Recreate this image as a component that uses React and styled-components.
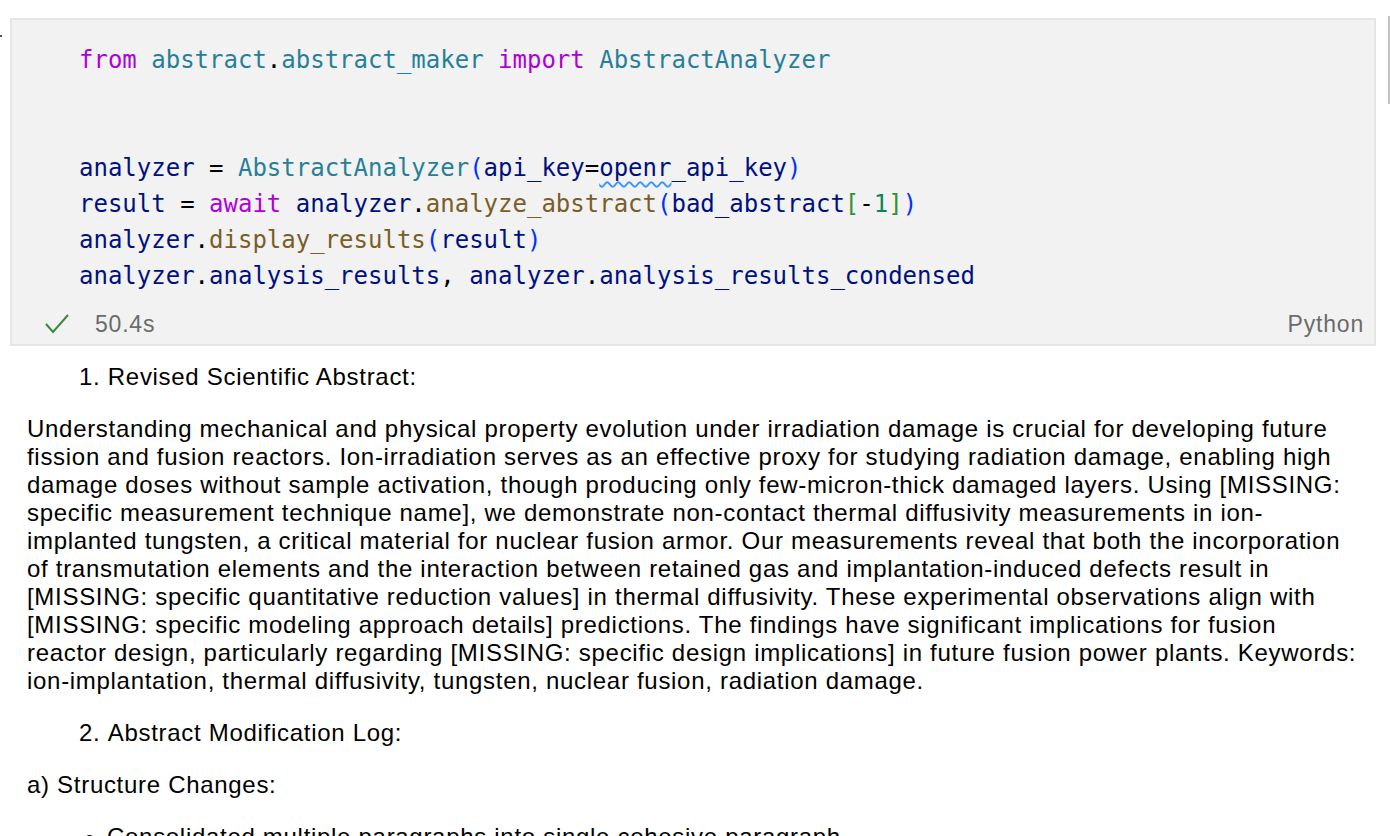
import React from "react";
import styled, { createGlobalStyle } from "styled-components";

const Global = createGlobalStyle`
  html, body { margin: 0; padding: 0; background: #ffffff; }
  body { font-family: "Liberation Sans", Arial, sans-serif; color: #000; overflow: hidden; }
`;

const Page = styled.div`
  position: relative;
  width: 1390px;
  height: 836px;
  overflow: hidden;
  padding-top: 18px;
  box-sizing: border-box;
`;

const Cell = styled.div`
  margin-left: 10px;
  width: 1366px;
  box-sizing: border-box;
  background: #f2f2f2;
  border: 2px solid #e6e6e6;
`;

const Code = styled.pre`
  margin: 0;
  padding: 22px 0 6px 67px;
  font-family: "DejaVu Sans Mono", Menlo, monospace;
  font-size: 24px;
  line-height: 36px;
  color: #001080;
  white-space: pre;
`;

const Tok = styled.span`
  color: ${(p) => p.$c};
`;

const Squiggle = styled.span`
  text-decoration: underline wavy #3794ff;
  text-decoration-thickness: 1.5px;
  text-underline-offset: 5px;
`;

const Status = styled.div`
  display: flex;
  align-items: center;
  height: 44px;
  box-sizing: border-box;
  padding: 4px 10px 0 33px;
  font-family: "Liberation Sans", Arial, sans-serif;
  font-size: 23px;
  letter-spacing: 0.8px;
  color: #6b6b6b;
`;

const Time = styled.span`
  margin-left: 26px;
`;

const Lang = styled.span`
  margin-left: auto;
`;

const Output = styled.div`
  padding: 17px 0 0 27px;
  font-size: 24px;
  line-height: 28px;
  letter-spacing: 0.7px;
`;

const Ordered = styled.ol`
  margin: 0 0 24px 0;
  padding-left: 52px;
  list-style: decimal inside;
`;

const Para = styled.p`
  margin: 0 0 24px 0;
  white-space: nowrap;
`;

const Line = styled.span`
  display: block;
`;

const Bullets = styled.ul`
  margin: 0;
  padding-left: 80px;
  list-style: disc;
`;

const ScrollThumb = styled.div`
  position: absolute;
  right: 0;
  top: 16px;
  width: 2px;
  height: 88px;
  background: #c1c1c1;
`;

const Dot = styled.div`
  position: absolute;
  left: 0;
  top: 35px;
  width: 2px;
  height: 2px;
  background: #555;
`;

const PURPLE = "#af00db";
const TEAL = "#267f99";
const BROWN = "#795e26";
const BLUE = "#0431fa";
const GREEN = "#319331";
const BLACK = "#000000";

const abstractLines = [
  "Understanding mechanical and physical property evolution under irradiation damage is crucial for developing future",
  "fission and fusion reactors. Ion-irradiation serves as an effective proxy for studying radiation damage, enabling high",
  "damage doses without sample activation, though producing only few-micron-thick damaged layers. Using [MISSING:",
  "specific measurement technique name], we demonstrate non-contact thermal diffusivity measurements in ion-",
  "implanted tungsten, a critical material for nuclear fusion armor. Our measurements reveal that both the incorporation",
  "of transmutation elements and the interaction between retained gas and implantation-induced defects result in",
  "[MISSING: specific quantitative reduction values] in thermal diffusivity. These experimental observations align with",
  "[MISSING: specific modeling approach details] predictions. The findings have significant implications for fusion",
  "reactor design, particularly regarding [MISSING: specific design implications] in future fusion power plants. Keywords:",
  "ion-implantation, thermal diffusivity, tungsten, nuclear fusion, radiation damage.",
];

function Check() {
  return (
    <svg width="24" height="20" viewBox="0 0 24 20" fill="none">
      <path d="M1 10 L8 18 L23 1" stroke="#388a34" strokeWidth="2" />
    </svg>
  );
}

export default function App() {
  return (
    <Page>
      <Global />
      <Dot />
      <ScrollThumb />
      <Cell>
        <Code>
          <Tok $c={PURPLE}>from</Tok> <Tok $c={TEAL}>abstract</Tok>
          <Tok $c={BLACK}>.</Tok>
          <Tok $c={TEAL}>abstract_maker</Tok> <Tok $c={PURPLE}>import</Tok>{" "}
          <Tok $c={TEAL}>AbstractAnalyzer</Tok>
          {"\n\n\n"}
          analyzer <Tok $c={BLACK}>=</Tok> <Tok $c={TEAL}>AbstractAnalyzer</Tok>
          <Tok $c={BLUE}>(</Tok>api_key<Tok $c={BLACK}>=</Tok>
          <Squiggle>openr</Squiggle>_api_key<Tok $c={BLUE}>)</Tok>
          {"\n"}
          result <Tok $c={BLACK}>=</Tok> <Tok $c={PURPLE}>await</Tok> analyzer
          <Tok $c={BLACK}>.</Tok>
          <Tok $c={BROWN}>analyze_abstract</Tok>
          <Tok $c={BLUE}>(</Tok>bad_abstract<Tok $c={GREEN}>[</Tok>
          <Tok $c={BLACK}>-</Tok>
          <Tok $c={"#098658"}>1</Tok>
          <Tok $c={GREEN}>]</Tok>
          <Tok $c={BLUE}>)</Tok>
          {"\n"}
          analyzer<Tok $c={BLACK}>.</Tok>
          <Tok $c={BROWN}>display_results</Tok>
          <Tok $c={BLUE}>(</Tok>result<Tok $c={BLUE}>)</Tok>
          {"\n"}
          analyzer<Tok $c={BLACK}>.</Tok>analysis_results<Tok $c={BLACK}>,</Tok>{" "}
          analyzer<Tok $c={BLACK}>.</Tok>analysis_results_condensed
        </Code>
        <Status>
          <Check />
          <Time>50.4s</Time>
          <Lang>Python</Lang>
        </Status>
      </Cell>
      <Output>
        <Ordered>
          <li>Revised Scientific Abstract:</li>
        </Ordered>
        <Para>
          {abstractLines.map((l, i) => (
            <Line key={i}>{l}</Line>
          ))}
        </Para>
        <Ordered start={2}>
          <li>Abstract Modification Log:</li>
        </Ordered>
        <Para>a) Structure Changes:</Para>
        <Bullets>
          <li>Consolidated multiple paragraphs into single cohesive paragraph</li>
        </Bullets>
      </Output>
    </Page>
  );
}
